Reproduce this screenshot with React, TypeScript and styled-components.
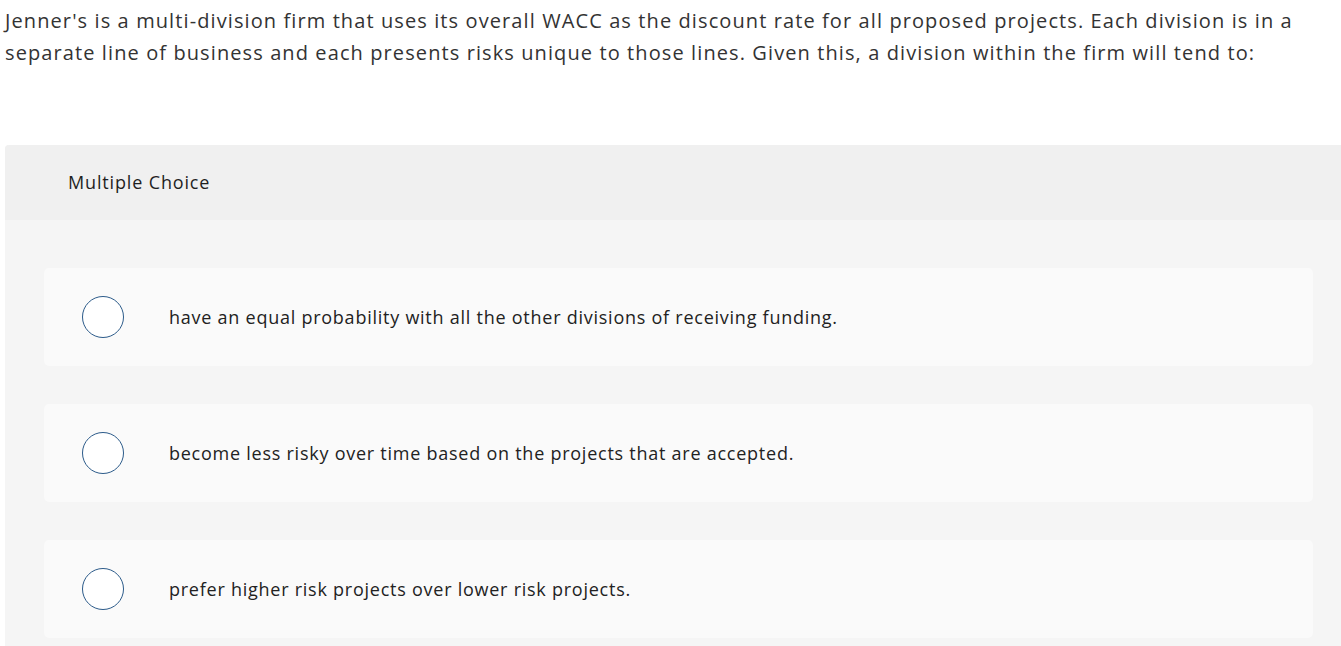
import React from "react";
import styled, { createGlobalStyle } from "styled-components";

const Global = createGlobalStyle`
  html, body { margin: 0; padding: 0; background: #ffffff; }
  body { font-family: "Open Sans", "Noto Sans", sans-serif; color: #333; overflow: hidden; }
`;

const Page = styled.div`
  width: 1341px;
  padding-left: 5px;
  box-sizing: border-box;
`;

const Question = styled.p`
  margin: 0;
  padding-top: 5px;
  font-size: 20px;
  line-height: 32px;
  color: #333;
  letter-spacing: 1.1px;
`;

const Panel = styled.section`
  margin-top: 76px;
  border-radius: 4px 0 0 0;
  overflow: hidden;
  background: #f5f5f5;
`;

const Header = styled.div`
  height: 75px;
  background: #f0f0f0;
  display: flex;
  align-items: center;
  padding-left: 63px;
  padding-bottom: 2px;
  box-sizing: border-box;
  font-size: 18px;
  color: #1f1f1f;
  letter-spacing: 0.85px;
`;

const Options = styled.div`
  display: flex;
  flex-direction: column;
  gap: 38px;
  padding: 48px 28px 20px 39px;
`;

const Option = styled.label`
  height: 98px;
  background: #fafafa;
  border-radius: 5px;
  display: flex;
  align-items: center;
  padding-left: 38px;
  cursor: pointer;
`;

const Radio = styled.span`
  width: 42px;
  height: 42px;
  box-sizing: border-box;
  border-radius: 50%;
  border: 1.5px solid #2c5b8a;
  background: #ffffff;
  flex-shrink: 0;
`;

const OptionText = styled.span`
  margin-left: 45px;
  font-size: 18px;
  color: #222;
  letter-spacing: 0.75px;
`;

const choices = [
  "have an equal probability with all the other divisions of receiving funding.",
  "become less risky over time based on the projects that are accepted.",
  "prefer higher risk projects over lower risk projects.",
];

export default function App() {
  return (
    <Page>
      <Global />
      <Question>
        Jenner's is a multi-division firm that uses its overall WACC as the discount rate for all proposed projects. Each division is in a separate line of business and each presents risks unique to those lines. Given this, a division within the firm will tend to:
      </Question>
      <Panel>
        <Header>Multiple Choice</Header>
        <Options>
          {choices.map((c) => (
            <Option key={c}>
              <Radio />
              <OptionText>{c}</OptionText>
            </Option>
          ))}
        </Options>
      </Panel>
    </Page>
  );
}
